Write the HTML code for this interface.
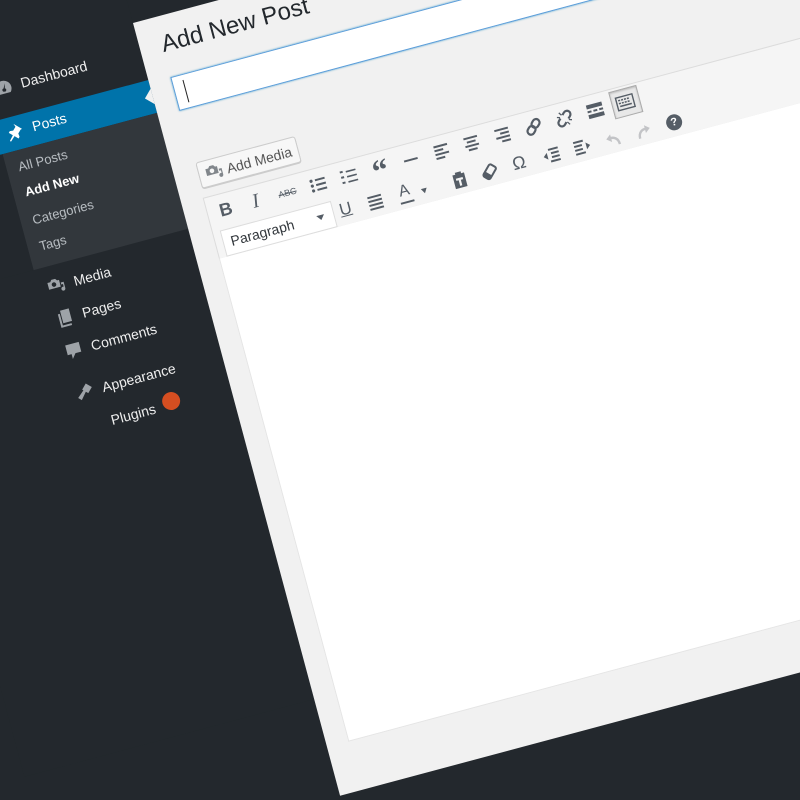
<!DOCTYPE html>
<html><head><meta charset="utf-8">
<style>
*{margin:0;padding:0;box-sizing:border-box}
html,body{width:800px;height:400px;overflow:hidden;background:#23282d;font-family:"Liberation Sans",sans-serif}
#w{position:absolute;left:133px;top:23px;width:0;height:0;transform-origin:0 0;transform:rotate(-15deg)}
.a{position:absolute}
.mi{position:absolute;left:-124px;color:#eee;font-size:14px;line-height:20px;white-space:nowrap}
.si{position:absolute;left:-148px;color:rgba(240,245,250,.7);font-size:13px;line-height:18px;white-space:nowrap}
.ic{position:absolute;width:20px;height:20px}
</style></head><body>
<div id="w">
  <div class="a" style="left:-300px;top:-200px;width:300px;height:900px;background:#23282d"></div>
  <div class="a" style="left:-300px;top:59px;width:300px;height:34px;background:#0073aa"></div>
  <div class="a" style="left:-160px;top:93px;width:160px;height:120px;background:#32373c"></div>
  <div class="a" style="left:-300px;top:93px;width:140px;height:120px;background:#23282d"></div>
  <div class="a" style="left:0;top:0;width:900px;height:800px;background:#f1f1f1"></div>
  <div class="a" style="left:-8px;top:68px;width:0;height:0;border-top:8px solid transparent;border-bottom:8px solid transparent;border-right:8px solid #f1f1f1"></div>

  <svg class="ic" style="left:-152px;top:19px" viewBox="0 0 20 20"><path fill="#9ea3a8" d="M10 3a8 8 0 0 0-8 8c0 2 .7 3.7 2 5h12a8 8 0 0 0 2-5 8 8 0 0 0-8-8zm0 11a1.6 1.6 0 1 1 0-3.2L12.5 6 11.3 11a1.6 1.6 0 0 1-1.3 3z"/></svg>
  <div class="mi" style="top:19px">Dashboard</div>
  <svg class="ic" style="left:-152px;top:64px" viewBox="0 0 20 20"><path fill="#fff" d="M10.4 2.5l7 7-1.6.4-3.2 3.2.4 3.4-1.4 1.4-3.3-3.3L3.5 19 2.6 18.1l4.3-4.8-3.3-3.3L5 8.6l3.4.4 3.2-3.2z"/></svg>
  <div class="mi" style="top:64px;color:#fff">Posts</div>
  <div class="si" style="top:101px">All Posts</div>
  <div class="si" style="top:127px;color:#fff;font-weight:bold">Add New</div>
  <div class="si" style="top:156px">Categories</div>
  <div class="si" style="top:183px">Tags</div>
  <svg class="ic" style="left:-152px;top:224px" viewBox="0 0 20 20"><path fill="#9ea3a8" d="M2 5h3l1.5-2h4L12 5h2v7H2zM8 10.5a2.3 2.3 0 1 0 0-4.6 2.3 2.3 0 0 0 0 4.6zM15 8h3v6.5a2 2 0 1 1-1.2-1.8V10H15z"/></svg>
  <div class="mi" style="top:224px">Media</div>
  <svg class="ic" style="left:-152px;top:257px" viewBox="0 0 20 20"><path fill="#9ea3a8" d="M7 2h9v13H7zM4 5h2v12h9v2H4z"/></svg>
  <div class="mi" style="top:257px">Pages</div>
  <svg class="ic" style="left:-152px;top:291px" viewBox="0 0 20 20"><path fill="#9ea3a8" d="M3 3h14v10h-6l-4 5v-5H3z"/></svg>
  <div class="mi" style="top:291px">Comments</div>
  <svg class="ic" style="left:-152px;top:334px" viewBox="0 0 20 20"><path fill="#9ea3a8" d="M13 2l5 5-5 5-2-2-6 7-3-3 7-6-1-1z"/></svg>
  <div class="mi" style="top:334px">Appearance</div>
  <div class="mi" style="top:368px">Plugins</div>
  <div class="a" style="left:-70px;top:366px;width:18px;height:18px;border-radius:9px;background:#d54e21"></div>

  <div class="a" style="left:22px;top:15px;font-size:24px;line-height:28px;color:#23282d;white-space:nowrap">Add New Post</div>
  <div class="a" style="left:22px;top:62px;width:900px;height:35px;background:#fff;border:1px solid #5b9dd9;box-shadow:0 0 2px rgba(30,140,190,.8)"></div>
  <div class="a" style="left:33px;top:68px;width:1px;height:23px;background:#222"></div>

  <div class="a" style="left:24px;top:151px;width:103px;height:27px;background:#f7f7f7;border:1px solid #ccc;border-radius:3px;box-shadow:0 1px 0 #ccc"></div>
  <svg class="ic" style="left:30px;top:155px" viewBox="0 0 20 20"><path fill="#82878c" d="M2 5h3l1.5-2h4L12 5h2v7H2zM8 10.5a2.3 2.3 0 1 0 0-4.6 2.3 2.3 0 0 0 0 4.6zM15 8h3v6.5a2 2 0 1 1-1.2-1.8V10H15z"/></svg>
  <div class="a" style="left:53px;top:156px;font-size:14px;line-height:18px;color:#555;white-space:nowrap">Add Media</div>

  <div class="a" style="left:22px;top:187px;width:900px;height:64px;background:#f5f5f5;border:1px solid #dcdcdc"></div>
  <div class="a" style="left:22px;top:250px;width:900px;height:500px;background:#fff;border:1px solid #e5e5e5;border-top:none"></div>

  <div class="a" style="left:35px;top:194px;font-size:18px;font-weight:bold;color:#555d66">B</div>
  <div class="a" style="left:69px;top:193px;font-size:20px;font-style:italic;font-family:'Liberation Serif',serif;color:#555d66">I</div>
  <div class="a" style="left:96px;top:199px;font-size:9px;color:#555d66;text-decoration:line-through">ABC</div>
  <svg class="ic" style="left:127px;top:194px" viewBox="0 0 20 20"><g fill="#555d66"><circle cx="4" cy="5" r="1.6"/><circle cx="4" cy="10" r="1.6"/><circle cx="4" cy="15" r="1.6"/><rect x="8" y="4" width="10" height="2"/><rect x="8" y="9" width="10" height="2"/><rect x="8" y="14" width="10" height="2"/></g></svg>
  <svg class="ic" style="left:159px;top:194px" viewBox="0 0 20 20"><g fill="#555d66"><rect x="2" y="3" width="3" height="2"/><rect x="2" y="8.5" width="3" height="2"/><rect x="2" y="14" width="3" height="2"/><rect x="8" y="4" width="10" height="1.6"/><rect x="8" y="9.2" width="10" height="1.6"/><rect x="8" y="14.5" width="10" height="1.6"/></g></svg>
  <div class="a" style="left:193px;top:190px;font-size:32px;font-weight:bold;font-family:'Liberation Serif',serif;color:#555d66;line-height:32px">“</div>
  <svg class="ic" style="left:223px;top:194px" viewBox="0 0 20 20"><rect x="3" y="9" width="14" height="2" fill="#555d66"/></svg>
  <svg class="ic" style="left:255px;top:194px" viewBox="0 0 20 20"><g fill="#555d66"><rect x="3" y="3" width="14" height="2"/><rect x="3" y="7" width="9" height="2"/><rect x="3" y="11" width="14" height="2"/><rect x="3" y="15" width="9" height="2"/></g></svg>
  <svg class="ic" style="left:286px;top:194px" viewBox="0 0 20 20"><g fill="#555d66"><rect x="3" y="3" width="14" height="2"/><rect x="5.5" y="7" width="9" height="2"/><rect x="3" y="11" width="14" height="2"/><rect x="5.5" y="15" width="9" height="2"/></g></svg>
  <svg class="ic" style="left:318px;top:194px" viewBox="0 0 20 20"><g fill="#555d66"><rect x="3" y="3" width="14" height="2"/><rect x="8" y="7" width="9" height="2"/><rect x="3" y="11" width="14" height="2"/><rect x="8" y="15" width="9" height="2"/></g></svg>
  <svg class="ic" style="left:350px;top:194px" viewBox="0 0 20 20"><g transform="rotate(-45 10 10)" fill="none" stroke="#555d66" stroke-width="2.2"><rect x="1.5" y="6.5" width="9" height="7" rx="3.5"/><rect x="9.5" y="6.5" width="9" height="7" rx="3.5"/></g></svg>
  <svg class="ic" style="left:382px;top:194px" viewBox="0 0 20 20"><g transform="rotate(-45 10 10)" fill="none" stroke="#555d66" stroke-width="2.2"><path d="M8 6.5H5a3.5 3.5 0 0 0 0 7h3M12 6.5h3a3.5 3.5 0 0 1 0 7h-3"/></g><g stroke="#555d66" stroke-width="1.3"><path d="M6 3l2 3M3 7l3 1M14 17l-2-3M17 13l-3-1"/></g></svg>
  <svg class="ic" style="left:414px;top:194px" viewBox="0 0 20 20"><g fill="#555d66"><rect x="2" y="3" width="16" height="4"/><rect x="2" y="9" width="4" height="2"/><rect x="8" y="9" width="4" height="2"/><rect x="14" y="9" width="4" height="2"/><rect x="2" y="13" width="16" height="4"/></g></svg>
  <div class="a" style="left:441px;top:190px;width:29px;height:28px;background:#e8e8e8;border:1px solid #aaa;box-shadow:inset 0 1px 2px rgba(0,0,0,.2)"></div>
  <svg class="ic" style="left:445px;top:194px" viewBox="0 0 20 20"><rect x="1.5" y="3.5" width="17" height="13" fill="none" stroke="#555d66" stroke-width="1.4"/><g fill="#555d66"><rect x="3.5" y="6" width="2" height="1.5"/><rect x="6.5" y="6" width="2" height="1.5"/><rect x="9.5" y="6" width="2" height="1.5"/><rect x="12.5" y="6" width="2" height="1.5"/><rect x="3.5" y="9" width="2" height="1.5"/><rect x="6.5" y="9" width="2" height="1.5"/><rect x="9.5" y="9" width="2" height="1.5"/><rect x="12.5" y="9" width="2" height="1.5"/><rect x="4" y="12" width="12" height="1.5"/></g></svg>

  <div class="a" style="left:30px;top:223px;width:115px;height:27px;background:#fff;border:1px solid #ddd"></div>
  <div class="a" style="left:38px;top:227px;font-size:14px;line-height:18px;color:#32373c">Paragraph</div>
  <div class="a" style="left:127px;top:234px;width:0;height:0;border-left:4px solid transparent;border-right:4px solid transparent;border-top:5px solid #555d66"></div>
  <div class="a" style="left:151px;top:225px;font-size:17px;color:#555d66;text-decoration:underline">U</div>
  <svg class="ic" style="left:178px;top:226px" viewBox="0 0 20 20"><g fill="#555d66"><rect x="3" y="3" width="14" height="2"/><rect x="3" y="7" width="14" height="2"/><rect x="3" y="11" width="14" height="2"/><rect x="3" y="15" width="14" height="2"/></g></svg>
  <div class="a" style="left:213px;top:224px;font-size:16px;color:#555d66">A</div>
  <div class="a" style="left:212px;top:243px;width:14px;height:2px;background:#555d66"></div>
  <div class="a" style="left:235px;top:235px;width:0;height:0;border-left:3.5px solid transparent;border-right:3.5px solid transparent;border-top:5px solid #555d66"></div>
  <svg class="ic" style="left:265px;top:226px" viewBox="0 0 20 20"><path fill="#555d66" d="M7 2h6v2h3v14H4V4h3zM6.5 8v2.2h2.4V16h2.2v-5.8h2.4V8z"/></svg>
  <svg class="ic" style="left:296px;top:226px" viewBox="0 0 20 20"><g transform="rotate(-45 10 10)"><rect x="3" y="6" width="14" height="8" rx="2" fill="none" stroke="#555d66" stroke-width="2"/><rect x="3" y="6" width="5" height="8" fill="#555d66"/></g></svg>
  <div class="a" style="left:330px;top:225px;font-size:18px;color:#555d66">Ω</div>
  <svg class="ic" style="left:360px;top:226px" viewBox="0 0 20 20"><g fill="#555d66"><rect x="8" y="3" width="10" height="2"/><rect x="10" y="7" width="8" height="2"/><rect x="10" y="11" width="8" height="2"/><rect x="8" y="15" width="10" height="2"/><path d="M2 10l4-3.5v7z"/></g></svg>
  <svg class="ic" style="left:392px;top:226px" viewBox="0 0 20 20"><g fill="#555d66"><rect x="2" y="3" width="10" height="2"/><rect x="2" y="7" width="8" height="2"/><rect x="2" y="11" width="8" height="2"/><rect x="2" y="15" width="10" height="2"/><path d="M18 10l-4-3.5v7z"/></g></svg>
  <svg class="ic" style="left:424px;top:226px" viewBox="0 0 20 20"><path d="M15 17c0-6-4-9-9-8" fill="none" stroke="#c3c4c7" stroke-width="2.4"/><path d="M3 9l5-4v8z" fill="#c3c4c7"/></svg>
  <svg class="ic" style="left:455px;top:226px" viewBox="0 0 20 20"><path d="M5 17c0-6 4-9 9-8" fill="none" stroke="#c3c4c7" stroke-width="2.4"/><path d="M17 9l-5-4v8z" fill="#c3c4c7"/></svg>
  <div class="a" style="left:489px;top:228px;width:16px;height:16px;border-radius:8px;background:#555d66;color:#fff;font-size:11px;font-weight:bold;text-align:center;line-height:16px">?</div>
</div>
</body></html>
